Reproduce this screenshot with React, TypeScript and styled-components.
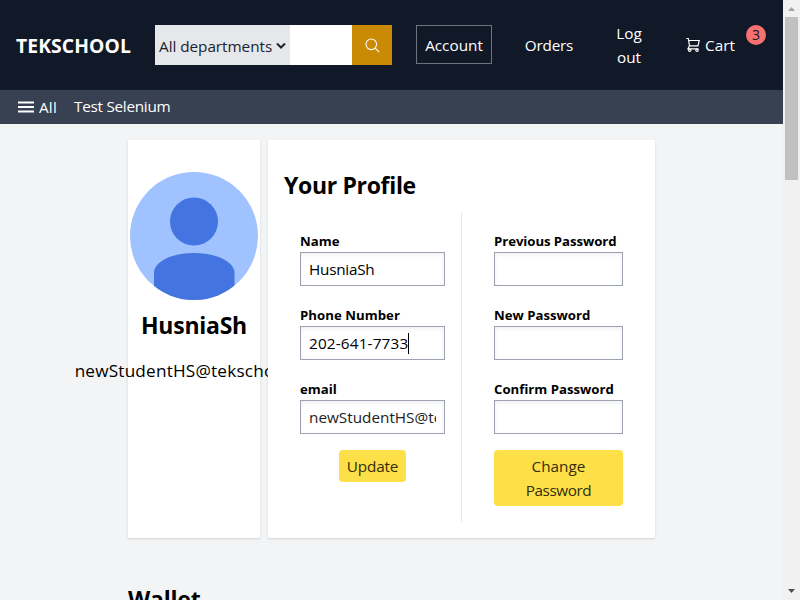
import React from "react";
import styled, { createGlobalStyle } from "styled-components";

const GlobalStyle = createGlobalStyle`
  *, *::before, *::after { box-sizing: border-box; }
  html, body { margin: 0; padding: 0; }
  body {
    height: 600px; overflow: hidden; background: #f3f4f6; color: #000;
    font-family: "Open Sans", "Noto Sans", sans-serif;
    font-size: 15.3px; line-height: 24px;
  }
  h1, h2, p { margin: 0; }
  input, button { font: inherit; color: inherit; }
`;

const Screen = styled.div`
  display: grid; grid-template-columns: 783px 17px;
  width: 800px; height: 600px; overflow: hidden;
`;
const Page = styled.div`height: 600px; overflow: hidden;`;

const TopBar = styled.header`
  display: flex; align-items: center; height: 90px; padding-left: 16px;
  background: #111827; color: #fff;
`;
const Label = styled.span<{ $ls?: number }>`
  white-space: nowrap; letter-spacing: ${(p) => p.$ls ?? 0}px;
`;
const Brand = styled.div`
  width: 139px; padding-top: 1px; font-size: 19.3px; font-weight: 700; line-height: 28px; white-space: nowrap;
`;
const Search = styled.div`
  display: grid; grid-template-columns: 135px 62px 40px; height: 40px; width: 237px;
`;
const Departments = styled.div`
  display: flex; align-items: center; justify-content: space-between;
  padding: 2px 4px 0; background: #e5e7eb; color: #1b2230;
`;
const Query = styled.input`
  width: 100%; min-width: 0; height: 40px; border: 0; padding: 0 8px; background: #fff; border-radius: 0; outline: 0;
`;
const SearchButton = styled.button`
  display: grid; place-items: center; padding: 0; border: 0; background: #ca8a04; color: #fff;
`;
const Nav = styled.nav`display: flex; align-items: center; margin-left: 24px;`;
const NavItem = styled.a<{ $w: number; $framed?: boolean; $tall?: boolean }>`
  display: flex; flex-direction: column; align-items: center; justify-content: center;
  width: ${(p) => p.$w}px; height: ${(p) => (p.$tall ? 50 : 39)}px; margin-bottom: 1px;
  border: 1px solid ${(p) => (p.$framed ? "#6b7280" : "transparent")};
`;
const Cart = styled.a`
  position: relative; display: flex; align-items: center; gap: 4px; margin-left: 34px; width: 80px; height: 40px;
`;
const CartCount = styled.span`
  position: absolute; left: 60px; top: 0; width: 20px; height: 20px; border-radius: 50%;
  background: #f87171; color: #111827; font-size: 14px; line-height: 20px; text-align: center;
`;
const SubBar = styled.div`
  display: flex; align-items: center; height: 34px; padding-left: 18px; padding-bottom: 1px;
  background: #374151; color: #fff;
`;
const MenuLines = styled.svg`display: block; margin-right: 5px; margin-top: 1px;`;
const MenuLabel = styled(Label)`width: 35px;`;
const StoreLink = styled(Label)`padding-bottom: 2px;`;

const Content = styled.main`padding: 16px 0 0 128px;`;
const Cards = styled.div`display: grid; grid-template-columns: 132px 387px; gap: 8px; height: 398px;`;
const Card = styled.section`
  min-width: 0; background: #fff; border-radius: 1px;
  box-shadow: 0 1px 3px rgba(0,0,0,.1), 0 1px 2px rgba(0,0,0,.06);
`;
const PersonCard = styled(Card)`display: flex; flex-direction: column; align-items: center; padding-top: 32px;`;
const UserName = styled.h2`
  margin-top: 9px; font-size: 23px; font-weight: 700; line-height: 32px; white-space: nowrap;
`;
const UserEmail = styled.p`
  margin-top: 16px; width: 240px; font-size: 17.2px; font-weight: 500; line-height: 28px; white-space: nowrap;
  display: flex; justify-content: center;
`;
const ProfileCard = styled(Card)`position: relative; padding: 29px 16px 16px;`;
const Title = styled.h2`font-size: 23px; font-weight: 700; line-height: 32px; white-space: nowrap;`;
const Columns = styled.div`
  display: grid; grid-template-columns: 178px 177px; grid-template-rows: 310px; margin-top: 11px;
`;
const Column = styled.form<{ $last?: boolean }>`
  display: flex; flex-direction: column;
  padding: ${(p) => (p.$last ? "19px 16px 0 32px" : "19px 16px 0 16px")};
  border-right: ${(p) => (p.$last ? "0" : "1px solid #e5e7eb")};
`;
const Field = styled.label`
  display: flex; flex-direction: column; flex: none; height: 55px; margin-bottom: 19px;
  font-size: 13.2px; font-weight: 700; line-height: 20px;
`;
const Input = styled.input`
  display: block; width: 100%; height: 34px; margin-top: 1px; padding: 0 8px; border: 1px solid #9ca3af;
  border-radius: 0; background: #fff; box-shadow: inset 0 2px 4px rgba(0,0,0,.06); outline: 0;
`;
const InputView = styled.span<{ $muted?: boolean }>`
  display: flex; align-items: center; height: 34px; margin-top: 1px; padding: 0 8px; border: 1px solid #9ca3af;
  background: #fff; box-shadow: inset 0 2px 4px rgba(0,0,0,.06);
  font-size: 15.3px; font-weight: 400; color: ${(p) => (p.$muted ? "#222" : "#000")};
`;
const Clip = styled.span`overflow: hidden; white-space: nowrap;`;
const Caret = styled.span`width: 1px; height: 21px; background: #000;`;
const Action = styled.button<{ $w: number; $h: number }>`
  align-self: center; margin-top: -3px; flex: none; width: ${(p) => p.$w}px; height: ${(p) => p.$h}px;
  display: flex; flex-direction: column; align-items: center; justify-content: center;
  padding: 0; border: 0; border-radius: 4px; background: #fde047; color: #332d0e;
`;
const WalletTitle = styled(Title)`margin-top: 45px;`;

const Scrollbar = styled.aside`
  display: flex; flex-direction: column; align-items: center; height: 600px; background: #f1f1f1;
`;
const Arrow = styled.svg`display: block; flex: none;`;
const Thumb = styled.div`width: 13px; height: 163px; background: #c1c1c1;`;
const Track = styled.div`flex: 1;`;

const Avatar = () => (
  <svg width="128" height="128" viewBox="0 0 128 128">
    <defs>
      <clipPath id="disc"><circle cx="64" cy="64" r="64" /></clipPath>
    </defs>
    <g clipPath="url(#disc)">
      <rect width="128" height="128" fill="#a0c2ff" />
      <circle cx="64" cy="49.5" r="24" fill="#4374e0" />
      <path d="M24 128V101C24 90 41 81 64 81S104.500 90 104.500 101V128Z" fill="#4374e0" />
    </g>
  </svg>
);

const SearchIcon = () => (
  <svg width="15" height="15" viewBox="0 0 15 15" fill="none" stroke="currentColor" strokeWidth="1.1">
    <circle cx="6.3" cy="6.3" r="5.300" />
    <path d="M10.100 10.100L14.200 14.200" />
  </svg>
);

const CartIcon = () => (
  <svg width="15" height="16" viewBox="0 0 15 16" fill="none" stroke="currentColor" strokeWidth="1.200">
    <path d="M0.300 1.500H2.300L3.500 8.800H12L13.200 3.500H2.700M3.500 8.800L1.900 11.900H12.500" />
    <circle cx="3.700" cy="13.200" r="1.200" />
    <circle cx="11" cy="13.200" r="1.200" />
  </svg>
);

export default function App() {
  return (
    <>
      <GlobalStyle />
      <Screen>
        <Page>
          <TopBar>
            <Brand><Label $ls={0.1}>TEKSCHOOL</Label></Brand>
            <Search>
              <Departments>
                <Label $ls={-0.04}>All departments</Label>
                <svg width="10" height="7" viewBox="0 0 10 7" fill="none" stroke="#1b2230" strokeWidth="2">
                  <path d="M1 0.500L5 4.500L9 0.500" />
                </svg>
              </Departments>
              <Query aria-label="Search" />
              <SearchButton aria-label="Submit search"><SearchIcon /></SearchButton>
            </Search>
            <Nav>
              <NavItem $w={76} $framed><Label>Account</Label></NavItem>
              <NavItem $w={114}><Label $ls={-0.2}>Orders</Label></NavItem>
              <NavItem $w={46} $tall><Label>Log</Label><Label>out</Label></NavItem>
            </Nav>
            <Cart>
              <CartIcon />
              <Label>Cart</Label>
              <CartCount>3</CartCount>
            </Cart>
          </TopBar>
          <SubBar>
            <MenuLines width="16" height="12" viewBox="0 0 16 12" fill="#fff">
              <path d="M0 0.500H16V2.500H0ZM0 5H16V7H0ZM0 9.500H16V11.500H0Z" />
            </MenuLines>
            <MenuLabel $ls={0.2}>All</MenuLabel>
            <StoreLink $ls={-0.27}>Test Selenium</StoreLink>
          </SubBar>
          <Content>
            <Cards>
              <PersonCard>
                <Avatar />
                <UserName><Label $ls={-0.25}>HusniaSh</Label></UserName>
                <UserEmail><Label $ls={0.19}>newStudentHS@tekschool.us</Label></UserEmail>
              </PersonCard>
              <ProfileCard>
                <Title><Label $ls={-0.33}>Your Profile</Label></Title>
                <Columns>
                  <Column>
                    <Field><Label>Name</Label><InputView><Label $ls={-0.25}>HusniaSh</Label></InputView></Field>
                    <Field><Label $ls={0.04}>Phone Number</Label><InputView><Label $ls={0.17}>202-641-7733</Label><Caret /></InputView></Field>
                    <Field><Label>email</Label><InputView $muted><Clip><Label>newStudentHS@tekschool.us</Label></Clip></InputView></Field>
                    <Action type="button" $w={67} $h={32}><Label $ls={-0.15}>Update</Label></Action>
                  </Column>
                  <Column $last>
                    <Field><Label $ls={-0.06}>Previous Password</Label><Input type="password" /></Field>
                    <Field><Label>New Password</Label><Input type="password" /></Field>
                    <Field><Label>Confirm Password</Label><Input type="password" /></Field>
                    <Action type="button" $w={129} $h={56}><Label>Change</Label><Label $ls={-0.45}>Password</Label></Action>
                  </Column>
                </Columns>
              </ProfileCard>
            </Cards>
            <WalletTitle><Label $ls={-0.2}>Wallet</Label></WalletTitle>
          </Content>
        </Page>
        <Scrollbar>
          <Arrow width="17" height="17" viewBox="0 0 17 17"><path d="M5 11L8.500 7L12 11Z" fill="#a3a3a3" /></Arrow>
          <Thumb />
          <Track />
          <Arrow width="17" height="17" viewBox="0 0 17 17"><path d="M5 6L8.500 10L12 6Z" fill="#505050" /></Arrow>
        </Scrollbar>
      </Screen>
    </>
  );
}
